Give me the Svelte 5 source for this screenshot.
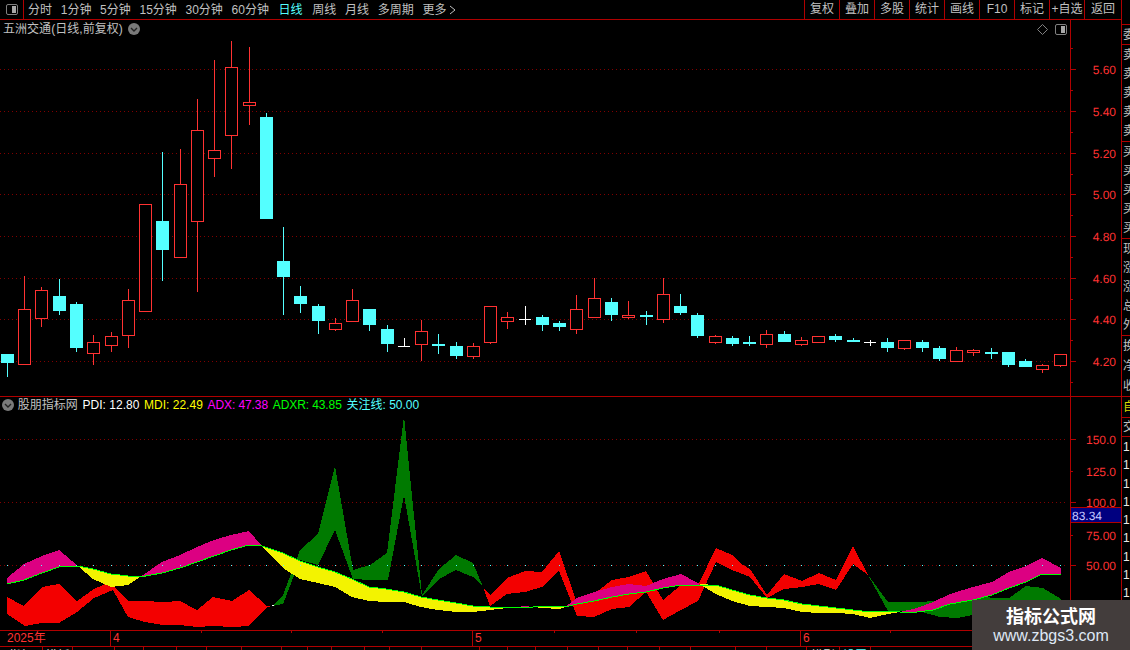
<script>
  const nav = [
    { t: '分时' }, { t: '1分钟' }, { t: '5分钟' }, { t: '15分钟' }, { t: '30分钟' }, { t: '60分钟' },
    { t: '日线', active: true }, { t: '周线' }, { t: '月线' }, { t: '多周期' }
  ];
  const tools = ['复权', '叠加', '多股', '统计', '画线', 'F10', '标记', '+自选', '返回'];

  // x0, top, bottom, high, low, type (r hollow red, c filled cyan, w white doji)
  const candles = [
    [1,354,363,354,377,'c'],[18,309,365,276,365,'r'],[35,290,319,287,327,'r'],[53,296,311,279,315,'c'],
    [70,304,348,302,352,'c'],[87,342,354,335,365,'r'],[105,336,346,332,352,'r'],[122,300,336,289,348,'r'],
    [139,204,312,204,312,'r'],[156,221,250,152,281,'c'],[174,184,258,149,258,'r'],[191,130,222,99,292,'r'],
    [208,150,159,60,177,'r'],[225,67,136,41,169,'r'],[243,102,106,47,125,'r'],[260,117,219,113,219,'c'],
    [277,261,277,227,315,'c'],[294,296,304,286,313,'c'],[312,306,321,304,334,'c'],[329,323,330,318,331,'r'],
    [346,300,322,289,322,'r'],[363,309,325,309,331,'c'],[381,329,344,325,352,'c'],[398,346,347,338,347,'w'],
    [415,331,345,320,361,'r'],[432,344,346,334,354,'c'],[450,346,356,342,359,'c'],[467,346,357,343,359,'r'],
    [484,306,343,306,344,'r'],[501,317,322,312,329,'r'],[519,319,320,306,325,'w'],[536,317,325,315,331,'c'],
    [553,323,327,321,331,'c'],[570,309,330,295,334,'r'],[588,298,318,278,318,'r'],[605,302,315,298,321,'c'],
    [622,315,318,301,319,'r'],[640,315,317,311,325,'c'],[657,294,320,278,323,'r'],[674,306,313,294,315,'c'],
    [691,315,336,313,338,'c'],[709,336,343,335,344,'r'],[726,338,344,336,346,'c'],[743,342,344,336,346,'c'],
    [760,334,345,330,348,'r'],[778,334,342,331,342,'c'],[795,340,345,337,346,'r'],[812,336,343,336,343,'r'],
    [829,336,340,334,342,'c'],[847,340,342,338,342,'c'],[864,342,343,340,346,'w'],[881,342,348,338,352,'c'],
    [898,340,349,340,350,'r'],[916,342,348,340,352,'c'],[933,348,359,346,361,'c'],[950,350,362,347,362,'r'],
    [967,350,353,349,356,'r'],[985,352,354,348,359,'c'],[1002,352,365,352,367,'c'],[1019,361,367,359,367,'c'],
    [1036,365,370,364,373,'r'],[1054,354,366,354,367,'r']
  ];

  const mainGrid = [
    [69, '5.60'], [111, '5.40'], [153, '5.20'], [194, '5.00'],
    [236, '4.80'], [278, '4.60'], [319, '4.40'], [361, '4.20']
  ];
  const mainMinor = [48, 90, 132, 174, 215, 257, 299, 340, 382];
  const subGrid = [[439, '150.0'], [502, '100.0'], [565, '50.00']];
  const subMinorLabels = [[471, '125.0'], [535, '75.00']];

  const pts = (a) => a.map((p) => p.join(',')).join(' ');
  const band = (u, l) => pts([...u, ...[...l].reverse()]);

  const reds = [
    band(
      [[7,597],[24,606],[42,587],[59,584],[77,601],[94,589],[110,582],[128,601],[145,601],[163,602],[180,601],[197,610],[213,597],[232,601],[249,590],[267,606],[272,606]],
      [[7,614],[25,626],[42,623],[59,623],[77,612],[94,598],[113,590],[128,617],[145,622],[163,625],[180,625],[197,627],[213,626],[232,627],[249,626],[267,607],[272,606]]
    ),
    band(
      [[483,587],[490,595],[507,578],[525,571],[542,572],[559,551],[577,603],[594,594],[612,580],[629,577],[646,571],[663,600],[681,585],[698,585],[716,548],[732,555],[740,563],[750,569],[767,595],[784,574],[802,581],[819,573],[836,580],[853,546],[868,575]],
      [[483,587],[490,606],[507,594],[525,592],[542,587],[559,571],[577,616],[594,617],[612,609],[629,607],[646,592],[663,620],[681,610],[698,601],[716,562],[732,570],[740,573],[750,577],[767,598],[784,589],[802,587],[819,584],[836,590],[853,564],[868,575]]
    )
  ];
  const greens = [
    band(
      [[272,606],[283,595],[300,550],[318,534],[335,466],[353,570],[370,565],[387,553],[404,416],[422,595],[439,569],[456,555],[473,563],[483,587]],
      [[272,606],[283,604],[300,560],[318,565],[335,530],[353,579],[370,580],[388,580],[404,495],[422,597],[439,579],[456,570],[473,577],[483,587]]
    ),
    band(
      [[868,575],[888,602],[922,602],[940,600],[957,597],[974,593],[992,598],[1009,598],[1026,586],[1043,588],[1061,599]],
      [[868,575],[888,611],[907,611],[922,612],[940,617],[957,618],[973,615],[992,608],[1009,600],[1026,610],[1043,610],[1061,610]]
    )
  ];
  const magentaSegs = [
    [[[7,578],[24,564],[42,556],[59,550],[78,566]], [[7,584],[24,580],[42,573],[59,567],[78,566]]],
    [[[140,577],[162,562],[180,555],[197,547],[214,540],[231,535],[249,531],[262,546]], [[140,577],[162,573],[180,568],[197,562],[214,556],[231,550],[249,545],[262,546]]],
    [[[516,607],[525,606],[533,607]], [[516,607],[525,608],[533,607]]],
    [[[565,607],[577,598],[594,592],[612,587],[629,584],[646,586],[663,579],[681,574],[698,583],[699,584]], [[565,607],[577,604],[594,601],[612,597],[629,594],[646,592],[663,588],[681,585],[698,585],[699,584]]],
    [[[900,612],[917,608],[933,602],[950,594],[973,587],[992,582],[1009,572],[1026,566],[1042,558],[1061,568]], [[900,612],[917,612],[933,610],[950,604],[973,600],[992,595],[1009,588],[1026,582],[1042,574],[1061,574]]]
  ];
  const yellowSegs = [
    [[[78,566],[93,569],[111,574],[128,576],[140,577]], [[78,566],[93,579],[111,587],[128,585],[140,577]]],
    [[[262,546],[283,553],[300,561],[318,567],[335,572],[352,579],[369,587],[386,589],[404,592],[421,597],[438,600],[456,603],[473,606],[490,607],[507,607],[516,607]],
     [[262,546],[283,568],[300,579],[318,583],[335,587],[352,597],[369,601],[386,602],[404,602],[421,607],[438,610],[456,612],[473,612],[490,610],[507,608],[516,607]]],
    [[[533,607],[542,606],[559,606],[565,607]], [[533,607],[542,608],[559,609],[565,607]]],
    [[[699,584],[716,585],[732,590],[750,595],[767,598],[784,600],[802,604],[819,606],[836,608],[853,610],[870,612],[888,611],[900,612]],
     [[699,584],[716,594],[732,601],[750,606],[767,607],[784,608],[802,612],[819,613],[836,613],[853,614],[870,618],[888,614],[900,612]]]
  ];
  const adxr = [
    [7,584],[24,580],[42,573],[59,567],[78,566],[93,569],[111,574],[128,576],[140,577],[162,573],[180,568],[197,562],[214,556],[231,550],[249,545],[262,546],
    [283,553],[300,561],[318,567],[335,572],[352,579],[369,587],[386,589],[404,592],[421,597],[438,600],[456,603],[473,606],[490,607],[507,607],[525,608],[533,607],[542,606],[559,606],[565,607],
    [577,604],[594,601],[612,597],[629,594],[646,592],[663,588],[681,585],[698,585],[716,585],[732,590],[750,595],[767,598],[784,600],[802,604],[819,606],[836,608],[853,610],[870,612],[888,611],[900,612],
    [917,612],[933,610],[950,604],[973,600],[992,595],[1009,588],[1026,582],[1042,574],[1061,574]
  ];
  const attention = candles.map((c) => c[0] + 6);

  const legend = [
    { t: 'PDI: 12.80', c: 'white' }, { t: 'MDI: 22.49', c: 'yellow' }, { t: 'ADX: 47.38', c: 'pink' },
    { t: 'ADXR: 43.85', c: 'lime' }, { t: '关注线: 50.00', c: 'cyan' }
  ];

  const dateTicks = [201, 291, 382, 554, 636, 719, 890, 975];
  const dateMarks = [{ x: 110, t: '4' }, { x: 472, t: '5' }, { x: 800, t: '6' }];

  const bottomSeps = [43,73,115,144,177,207,242,282,308,332,365,390,422,480,508,536,568,599,628,660,691,736,767,807,840,871];
  const bottomLabels = { 0: '指标', 1: '模板', 24: '模型', 25: '设置' };
  const bottomCells = bottomSeps.map((x, i) => ({ w: x - (i ? bottomSeps[i - 1] : 0), t: bottomLabels[i] ?? '', on: i === 25 }));

  const sideGroups = [
    { h: 25, rows: [] },
    { h: 20, rows: ['委'] },
    { h: 97, rows: ['卖', '卖', '卖', '卖', '卖'] },
    { h: 97, rows: ['买', '买', '买', '买', '买'] },
    { h: 97, rows: ['现', '涨', '涨', '总', '外'] },
    { h: 61, rows: ['换', '净', '收'] },
    { h: 21, rows: ['自'], yellow: true },
    { h: 19, rows: ['交'] },
    { h: 213, rows: ['1', '1', '1', '1', '1', '1', '1', '1', '1', '1', '1'], digits: true }
  ];
</script>

<div class="screen">
  <div class="left">
    <header class="toolbar">
      <div class="toggle-cell">
        <span class="toggle"><span></span></span>
      </div>
      <nav class="nav">
        {#each nav as n}
          <span class:active={n.active}>{n.t}</span>
        {/each}
        <span class="more">更多<svg width="7" height="10" viewBox="0 0 7 10"><path d="M1 1l5 4-5 4" fill="none" stroke="#c0c0c0"/></svg></span>
      </nav>
      <div class="tools">
        {#each tools as t}
          <span>{t}</span>
        {/each}
      </div>
    </header>

    <section class="pane pane-main">
      <div class="title">
        <span class="stock">五洲交通 (日线,前复权)</span>
        <svg class="chev" width="12" height="12" viewBox="0 0 12 12"><circle cx="6" cy="6" r="6" fill="#7a7a7a"/><path d="M3 5l3 3 3-3" fill="none" stroke="#222" stroke-width="1.4"/></svg>
      </div>
      <div class="corner">
        <svg width="11" height="11" viewBox="0 0 11 11"><path d="M5.5 .5l5 5-5 5-5-5z" fill="none" stroke="#808080"/></svg>
        <span class="toggle"><span></span></span>
      </div>
      <svg class="plot" width="1121" height="376" viewBox="0 20 1121 376" shape-rendering="crispEdges">
        {#each mainGrid as g}
          <line class="grid" x1="0" x2="1066" y1={g[0] + .5} y2={g[0] + .5} />
          <line class="axis" x1="1071" x2="1076" y1={g[0] + .5} y2={g[0] + .5} />
          <text class="lab" x="1116" y={g[0] + 5} text-anchor="end" text-rendering="geometricPrecision">{g[1]}</text>
        {/each}
        {#each mainMinor as y}
          <line class="axis" x1="1071" x2="1073" y1={y + .5} y2={y + .5} />
        {/each}
        <line class="axis" x1="1070.5" x2="1070.5" y1="20" y2="396" />
        {#each candles as [x, top, bot, hi, lo, k]}
          {#if k === 'w'}
            <rect class="w" x={x + 6} y={hi} width="1" height={lo - hi} />
            <rect class="w" x={x} y={top} width="12" height="1" />
          {:else if k === 'c'}
            <rect class="c" x={x + 6} y={hi} width="1" height={lo - hi} />
            <rect class="c" x={x} y={top} width="13" height={bot - top} />
          {:else}
            <rect class="r" x={x + 6} y={hi} width="1" height={top - hi} />
            <rect class="r" x={x + 6} y={bot} width="1" height={lo - bot} />
            <rect class="hollow" x={x + .5} y={top + .5} width="12" height={bot - top - 1} />
          {/if}
        {/each}
      </svg>
    </section>

    <section class="pane pane-sub">
      <div class="title sub-title">
        <svg class="chev" width="12" height="12" viewBox="0 0 12 12"><circle cx="6" cy="6" r="6" fill="#7a7a7a"/><path d="M3 5l3 3 3-3" fill="none" stroke="#222" stroke-width="1.4"/></svg>
        <span class="name">股朋指标网</span>
        {#each legend as l}
          <span class={l.c}>{l.t}</span>
        {/each}
      </div>
      <svg class="plot" width="1121" height="233" viewBox="0 397 1121 233" shape-rendering="crispEdges">
        {#each subGrid as g}
          <line class="grid" x1="0" x2="1066" y1={g[0] + .5} y2={g[0] + .5} />
          <line class="axis" x1="1071" x2="1076" y1={g[0] + .5} y2={g[0] + .5} />
          <text class="lab" x="1116" y={g[0] + 5} text-anchor="end" text-rendering="geometricPrecision">{g[1]}</text>
        {/each}
        {#each subMinorLabels as g}
          <line class="axis" x1="1071" x2="1073" y1={g[0] + .5} y2={g[0] + .5} />
          <text class="lab" x="1116" y={g[0] + 5} text-anchor="end" text-rendering="geometricPrecision">{g[1]}</text>
        {/each}
        <line class="axis" x1="1070.5" x2="1070.5" y1="397" y2="630" />
        {#each reds as p}<polygon points={p} fill="#f30000" />{/each}
        {#each greens as p}<polygon points={p} fill="#007a00" />{/each}
        {#each magentaSegs as [u, l]}<polygon points={band(u, l)} fill="#dc0082" />{/each}
        {#each yellowSegs as [u, l]}<polygon points={band(u, l)} fill="#f3f300" />{/each}
        <polyline points={pts(adxr)} fill="none" stroke="#00ff00" stroke-width="1" />
        {#each attention as x}
          <rect x={x} y="565" width="1" height="1" fill="#54ffff" />
        {/each}
        <rect x="272" y="605" width="2" height="1" fill="#fff" />
        <rect x="1071" y="507" width="50" height="16" fill="#000080" />
        <line class="axis" x1="1071" x2="1121" y1="507.5" y2="507.5" />
        <line class="axis" x1="1071" x2="1121" y1="522.5" y2="522.5" />
        <text class="boxval" x="1072" y="520" text-rendering="geometricPrecision">83.34</text>
      </svg>
    </section>

    <div class="dates">
      <span class="year">2025年</span>
      {#each dateMarks as m}
        <span class="mark" style="left:{m.x}px">{m.t}</span>
      {/each}
      {#each dateTicks as x}
        <i class="tick" style="left:{x}px"></i>
      {/each}
    </div>

    <div class="tabs">
      {#each bottomCells as c}
        <span class:on={c.on} style="width:{c.w}px">{c.t}</span>
      {/each}
    </div>
  </div>

  <aside class="side">
    {#each sideGroups as g}
      <div class="group" class:yellow={g.yellow} class:digits={g.digits} style="height:{g.h}px">
        {#each g.rows as r}
          <span>{r}</span>
        {/each}
      </div>
    {/each}
  </aside>

  <div class="watermark">
    <strong>指标公式网</strong>
    <span>www.zbgs3.com</span>
  </div>
</div>

<style>
  :global(body) {
    margin: 0;
    background: #000;
  }
  .screen {
    position: relative;
    width: 1130px;
    height: 650px;
    display: flex;
    overflow: hidden;
    background: #000;
    color: #c0c0c0;
    font: 12px/14px 'Liberation Sans', 'Noto Sans CJK SC', sans-serif;
  }
  .left {
    width: 1121px;
    flex: none;
    display: flex;
    flex-direction: column;
  }
  .toolbar {
    height: 19px;
    flex: none;
    display: flex;
    align-items: stretch;
    border-bottom: 1px solid #b00000;
  }
  .toggle-cell {
    width: 23px;
    flex: none;
    border-right: 1px solid #b00000;
    display: flex;
    align-items: center;
    justify-content: center;
  }
  .toggle {
    width: 10px;
    height: 9px;
    border: 1px solid #808080;
    border-radius: 2px;
    display: flex;
    justify-content: flex-end;
    padding: 0;
    box-sizing: content-box;
  }
  .toggle span {
    width: 4px;
    margin: 1px;
    background: #a8a8a8;
  }
  .nav {
    display: flex;
    align-items: center;
    gap: 8.7px;
    margin-left: 4px;
    white-space: nowrap;
  }
  .nav .active {
    color: #54ffff;
    margin: 0 1px;
  }
  .more {
    display: inline-flex;
    align-items: center;
    gap: 3px;
  }
  .tools {
    margin-left: auto;
    display: flex;
    white-space: nowrap;
  }
  .tools span {
    width: 35px;
    box-sizing: border-box;
    border-left: 1px solid #b00000;
    text-align: center;
    line-height: 19px;
  }
  .tools span:last-child {
    width: 37px;
  }
  .pane {
    position: relative;
    flex: none;
    border-bottom: 1px solid #b00000;
  }
  .pane-main {
    height: 376px;
  }
  .pane-sub {
    height: 233px;
    border-bottom: 0;
  }
  .plot {
    display: block;
  }
  .grid {
    stroke: #800000;
    stroke-width: 1;
    stroke-dasharray: 1 3;
  }
  .axis {
    stroke: #b00000;
    stroke-width: 1;
  }
  .lab {
    fill: #ff3232;
    font-size: 12px;
  }
  .boxval {
    fill: #c8c8ff;
    font-size: 12px;
  }
  .c { fill: #54ffff; }
  .r { fill: #ff3232; }
  .w { fill: #fff; }
  .hollow {
    fill: #000;
    stroke: #ff3232;
    stroke-width: 1;
  }
  .title {
    position: absolute;
    left: 3px;
    top: 2px;
    display: flex;
    align-items: center;
    gap: 5px;
    white-space: nowrap;
  }
  .stock {
    word-spacing: -3px;
  }
  .sub-title {
    left: 2px;
    top: 1px;
    gap: 4.8px;
  }
  .sub-title .chev {
    margin-right: -1px;
  }
  .pink, .lime {
    letter-spacing: -0.1px;
  }
  .white { color: #fff; }
  .yellow { color: #ffff00; }
  .pink { color: #ff00ff; }
  .lime { color: #00ff00; }
  .cyan { color: #54ffff; }
  .corner {
    position: absolute;
    right: 54px;
    top: 4px;
    display: flex;
    align-items: center;
    gap: 7px;
  }
  .dates {
    position: relative;
    flex: none;
    height: 15px;
    border-top: 1px solid #b00000;
    color: #ff3232;
    line-height: 15px;
  }
  .year {
    position: absolute;
    left: 7px;
    top: 0;
  }
  .mark {
    position: absolute;
    top: 0;
    height: 15px;
    padding-left: 2px;
    border-left: 1px solid #b00000;
  }
  .tick {
    position: absolute;
    top: 0;
    width: 1px;
    height: 2px;
    background: #b00000;
  }
  .tabs {
    flex: none;
    height: 3px;
    display: flex;
    overflow: hidden;
    border-top: 1px solid #b00000;
  }
  .tabs span {
    flex: none;
    box-sizing: border-box;
    border-right: 1px solid #b00000;
    height: 14px;
    line-height: 18px;
    text-align: center;
    white-space: nowrap;
    color: #e0e0e0;
  }
  .tabs .on {
    color: #54ffff;
  }
  .side {
    flex: none;
    width: 9px;
    box-sizing: border-box;
    border-left: 1px solid #b00000;
    overflow: hidden;
    padding-left: 1px;
  }
  .group {
    box-sizing: border-box;
    border-bottom: 1px solid #b00000;
    margin-left: -1px;
    padding-left: 1px;
    display: flex;
    flex-direction: column;
    justify-content: space-around;
    overflow: hidden;
    color: #c0c0c0;
  }
  .group span {
    display: block;
    width: 12px;
    line-height: 14px;
  }
  .group.yellow {
    color: #d8d800;
  }
  .group.digits {
    border-bottom: 0;
    color: #e8e8e8;
    justify-content: flex-start;
    gap: 4.3px;
    padding-top: 3px;
  }
  .watermark {
    position: absolute;
    left: 972px;
    top: 600px;
    width: 158px;
    height: 50px;
    background: #433d3c;
    display: flex;
    flex-direction: column;
    align-items: center;
    color: #dfe8f5;
  }
  .watermark strong {
    margin-top: 4px;
    font: 700 18px/22px 'Noto Sans CJK SC', sans-serif;
    color: #fff;
  }
  .watermark span {
    font: 16px/20px 'Liberation Sans', sans-serif;
  }
</style>
